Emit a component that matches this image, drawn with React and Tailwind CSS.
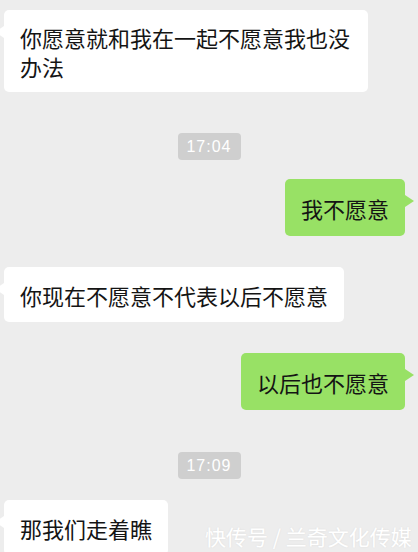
import React from 'react';

const font = { fontFamily: '"Noto Sans CJK SC", "Noto Sans", sans-serif' };

const Bubble = ({ mine, text, className = '' }) => (
    <div className={`relative w-fit rounded-[5px] px-[16px] text-[22px] text-[#141414] ${
        mine ? 'self-end mr-[13px] bg-[#98e165]' : 'ml-[4px] bg-white max-w-[364px]'
    } ${className}`}>
        {/* tail */}
        {mine ? (
            <span className="absolute top-[16px] -right-[9px] w-0 h-0 border-y-[6px] border-y-transparent border-l-[9px] border-l-[#98e165]" />
        ) : (
            <span className="absolute top-[16px] -left-[9px] w-0 h-0 border-y-[6px] border-y-transparent border-r-[9px] border-r-white" />
        )}
        {text}
    </div>
);

const Time = ({ value, className = '' }) => (
    <div className={`self-center flex items-center justify-center w-[63px] h-[27px] rounded-[4px] bg-[#cfcfcf] text-white text-[16px] tracking-[1px] font-['Liberation_Sans',sans-serif] ${className}`}>
        {value}
    </div>
);

const App = () => {
    return (
        <div className="relative w-[418px] h-[552px] overflow-hidden bg-[#ededed]" style={font}>
            <div className="flex flex-col pt-[10px]">
                <Bubble text="你愿意就和我在一起不愿意我也没办法" className="pt-[13px] pb-[11px] leading-[29px]" />
                <Time value="17:04" className="mt-[41px]" />
                <Bubble mine text="我不愿意" className="mt-[19px] pt-[14px] pb-[13px] leading-[30px]" />
                <Bubble text="你现在不愿意不代表以后不愿意" className="mt-[31px] pt-[13px] pb-[12px] leading-[30px]" />
                <Bubble mine text="以后也不愿意" className="mt-[31px] pt-[14px] pb-[13px] leading-[30px]" />
                <Time value="17:09" className="mt-[42px]" />
                <Bubble text="那我们走着瞧" className="mt-[21px] pt-[13px] pb-[12px] leading-[30px]" />
            </div>

            {/* watermark */}
            <div className="absolute left-[205px] top-[521px] text-[21px] leading-[30px] text-white whitespace-nowrap [text-shadow:0_0_2px_rgba(0,0,0,0.08)]">
                快传号 / 兰奇文化传媒
            </div>
        </div>
    );
};

export default App;
